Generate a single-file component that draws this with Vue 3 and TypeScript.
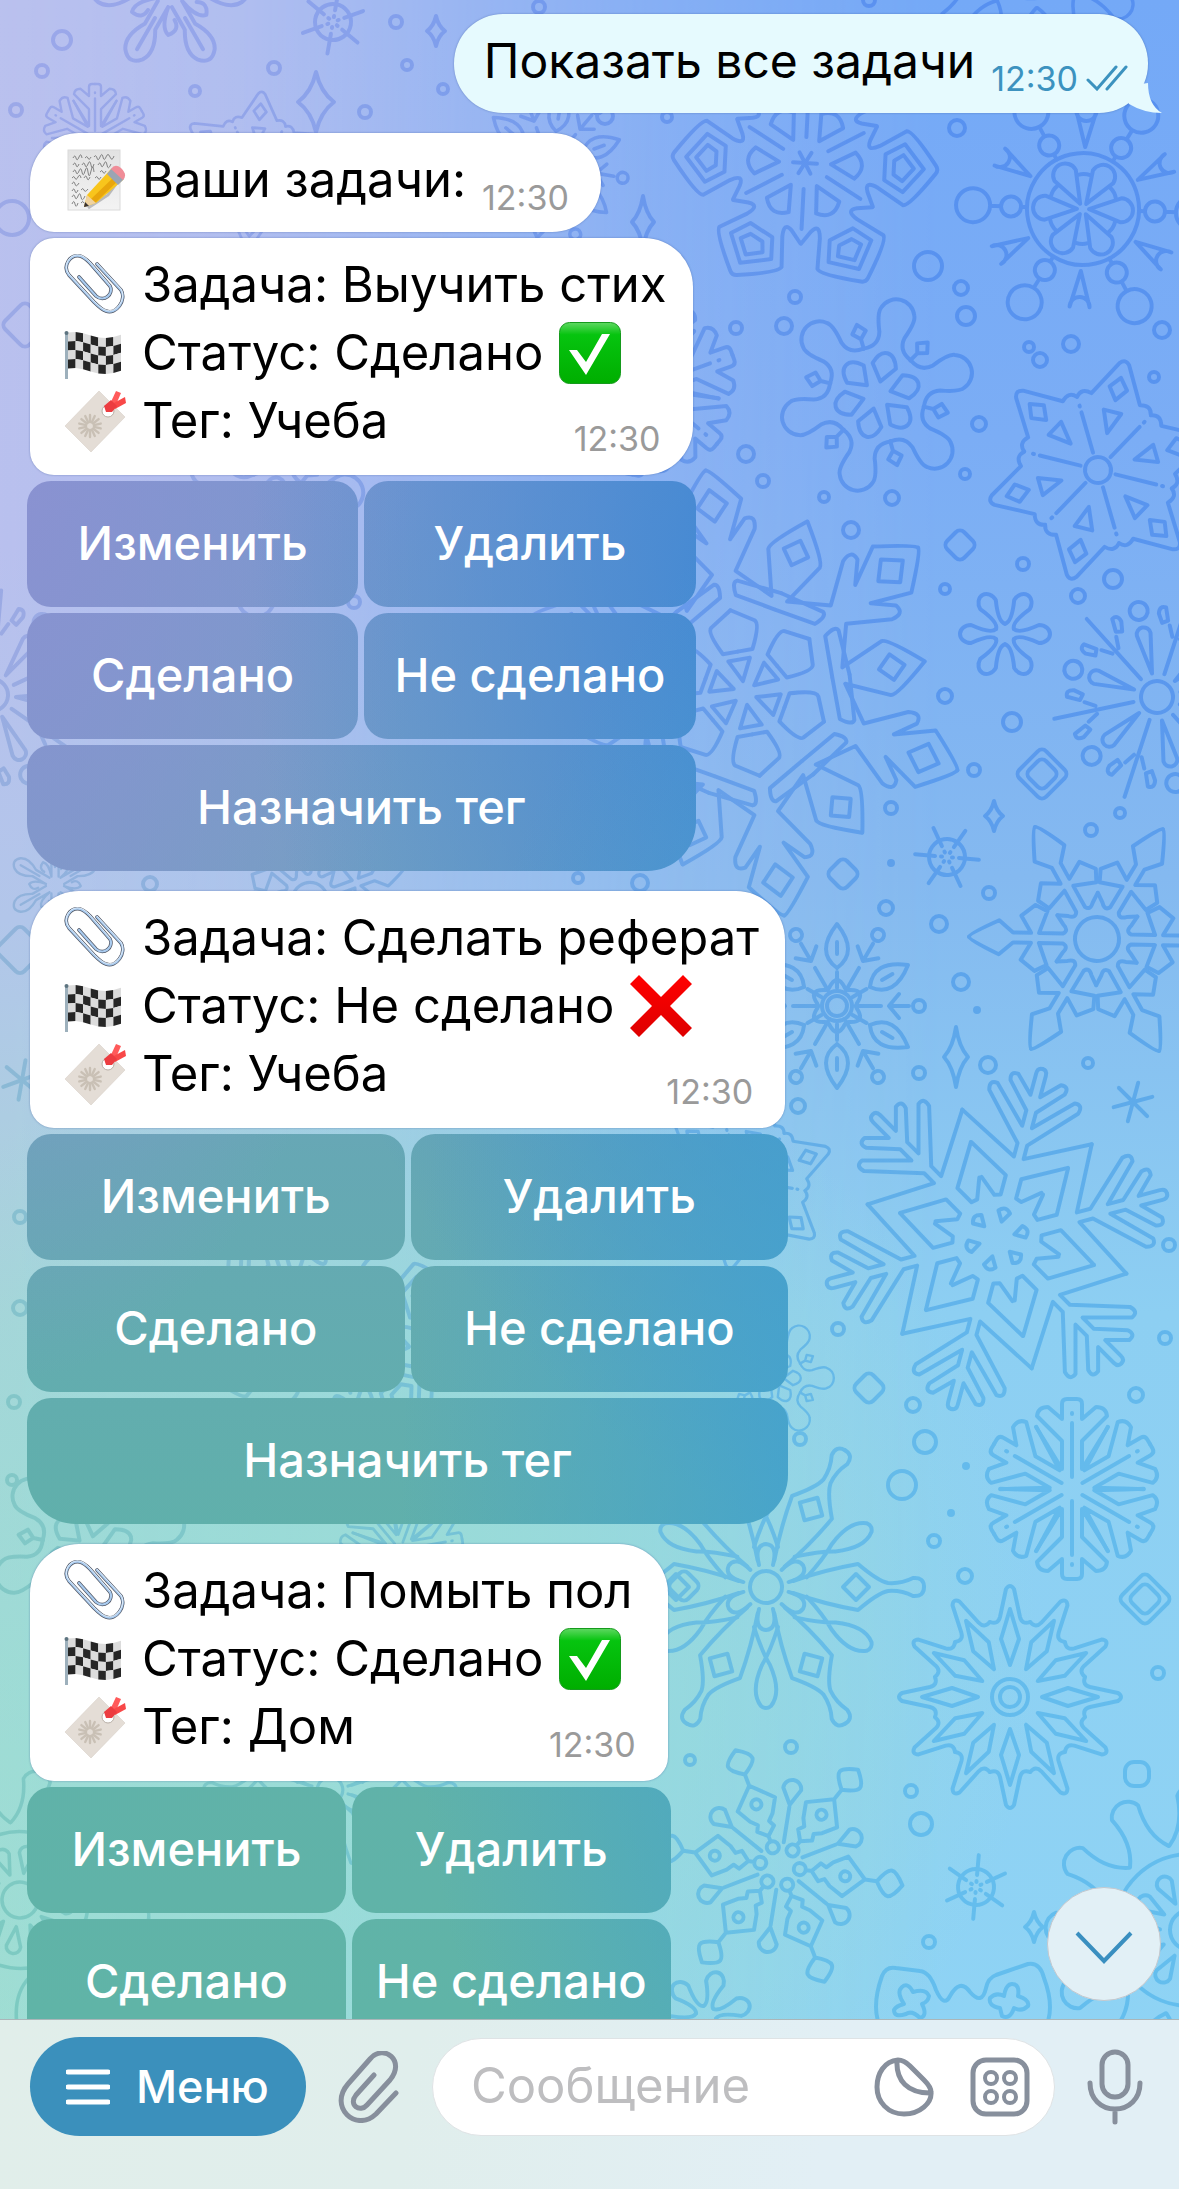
<script setup lang="ts">
import { ref } from 'vue'

interface Task {
  id: number
  title: string
  status: string
  done: boolean
  tag: string
  time: string
  actions: string[]
}

interface FlakeShape {
  n: number
  arm?: string[]
  half?: string[]
  mid?: string[]
  rings?: number[]
}

interface Flake {
  kind: string
  x: number
  y: number
  rot: number
  scale?: number
}

const baseActions = ['Изменить', 'Удалить', 'Сделано', 'Не сделано']
const tagAction = 'Назначить тег'

const tasks: Task[] = [
  { id: 1, title: 'Выучить стих', status: 'Сделано', done: true, tag: 'Учеба', time: '12:30', actions: [...baseActions, tagAction] },
  { id: 2, title: 'Сделать реферат', status: 'Не сделано', done: false, tag: 'Учеба', time: '12:30', actions: [...baseActions, tagAction] },
  { id: 3, title: 'Помыть пол', status: 'Сделано', done: true, tag: 'Дом', time: '12:30', actions: baseActions },
]

const draft = ref('')

/* Each shape describes one arm pointing up from the origin; `half` is mirrored, `mid` sits between arms. */
const shapes: Record<string, FlakeShape> = {
  kites: {
    n: 6,
    arm: [
      'M-40-70L-26-64Q-14-60-21-74L-37-100Q-38-106-4-131Q0-134 4-131Q38-106 37-100L21-74Q14-60 26-64L40-70',
      'M0-119L24-99L13-80H-13L-24-99Z',
      'M0-109L13-98L7-89H-7L-13-98Z',
      'M0-26L13-50Q0-64-13-50Z',
      'M0 0V-12',
    ],
    mid: ['M0-26V-66'],
  },
  wheel: {
    n: 6,
    rings: [56],
    arm: [
      'M0-6L-12-38A12 12 0 0 1 12-38Z',
      'M0-56V-62M10-72A10 10 0 1 1-10-72A10 10 0 1 1 10-72M0-82V-93M17-110A17 17 0 1 1-17-110A17 17 0 1 1 17-110',
    ],
    mid: ['M0-62L-10-98A10 10 0 0 0 10-98Z', 'M-6-34Q0-36 6-34'],
  },
  blob: {
    n: 6,
    arm: [
      'M-24-42Q-10-48-13-62Q-20-80-17-86A18 18 0 0 1 17-86Q20-80 13-62Q10-48 24-42',
      'M0-14L12-30Q8-43 0-43T-12-30Z',
    ],
    mid: ['M0-48V-58M0-58L7-65L0-73L-7-65Z'],
  },
  star: {
    n: 6,
    rings: [13],
    arm: ['M-38-66Q-36-76-25-73L-5-109Q0-115 5-109L25-73Q36-76 38-66', 'M0-38L9-60H-9Z', 'M0-72L9-84L0-95L-9-84Z'],
    mid: ['M0-18V-60M0-66V-67'],
  },
  crystal: {
    n: 6,
    half: [
      'M0-226Q4-226 30-192L12-154L30-172Q42-174 38-160L12-122L43-91L48-138Q50-144 91-158',
      'M53-92L12-112Q6-112 8-98L44-77',
      'M0-84L22-70Q27-66 15-42H0',
    ],
    arm: ['M0-206L15-190L0-174L-15-190Z', 'M0-12L11-34H-11Z'],
    mid: ['M0-162L13-149L0-136L-13-149Z'],
  },
  petals: { n: 6, arm: ['M-5-9Q0-14-9-34A9 11 0 1 1 9-34Q0-14 5-9'] },
  firework: {
    n: 6,
    rings: [16],
    arm: ['M0-24V-105M10-72L4-62M-10-72L-4-62M13-76L19-88Q26-88 24-80L18-72ZM-13-76L-19-88Q-26-88-24-80L-18-72Z'],
    mid: ['M0-24L-7-64A7 7 0 0 1 7-64ZM9-88A9 9 0 1 1-9-88A9 9 0 1 1 9-88'],
  },
  lace: {
    n: 6,
    rings: [22],
    half: ['M0-128Q3-128 17-98L5-84V-66L22-76L33-62L27-50L5-58V-34Q8-28 14-34L23-40'],
  },
  leaf: {
    n: 6,
    rings: [15, 10],
    arm: ['M0-38Q-22-54 0-82Q22-54 0-38M0-52V-64M0-18V-34M-8-18Q0-34 8-18'],
    mid: ['M0-18V-44M0-52V-72M-12-62L0-52L12-62M6-82A6 6 0 1 1-6-82A6 6 0 1 1 6-82'],
  },
  fir: {
    n: 6,
    half: [
      'M0-176Q5-176 5-170V-148L22-165Q31-166 28-157L5-132V-116L40-151Q49-152 46-142L5-98V-84L67-116',
      'M50-87L8-64V-44L14-42L31-56',
    ],
    arm: ['M0-18L6-28Q0-35-6-28Z'],
  },
  ferns: {
    n: 6,
    half: ['M0-90H5Q10-90 10-85V-70L24-82Q34-82 35-73L10-48V-20L26-46L36-62'],
    arm: ['M0-12V-66M0-75V-76'],
  },
  sun: {
    n: 12,
    rings: [18, 10],
    arm: ['M-20-75Q-12-72-10-80L-4-108Q0-114 4-108L10-80Q12-72 20-75', 'M0-32L9-58L0-88L-9-58Z'],
  },
  bloom: {
    n: 6,
    rings: [16],
    half: ['M0-158Q10-158 9-147Q3-135 4-122Q6-112 23-92Q17-58 6-27'],
    arm: ['M0-103L13-90L0-77L-13-90Z'],
    mid: [
      'M-12-40Q-4-65 4-78Q16-105 5-119Q0-123-5-119Q-16-105-4-78Q4-65 12-40',
      'M-7-22Q-12-42 0-43Q12-42 7-22',
    ],
  },
  lantern: {
    n: 6,
    arm: [
      'M6-20A6 6 0 1 1-6-20A6 6 0 1 1 6-20M0-26V-32M0-32L9-40L6-46L12-52L20-66L0-86L-20-66L-12-52L-6-46L-9-40ZM5-66A5 5 0 1 1-5-66A5 5 0 1 1 5-66M0-86V-98M0-98Q13-106 13-111Q13-116 0-124Q-13-116-13-111Q-13-106 0-98',
    ],
    mid: ['M0-24V-60M0-62L-9-78A9 9 0 0 1 9-78Z'],
  },
  daisy: {
    n: 12,
    rings: [76, 20],
    arm: ['M0-30L-8-52A8 8 0 0 1 8-52Z', 'M-22-84Q-8-104-15-134A16 16 0 0 1 15-134Q8-104 22-84'],
  },
  burst: { n: 6, rings: [18], arm: ['M0-12V-32M0-5V-6'] },
  asterisk: { n: 6, arm: ['M0 0V-20'] },
  oak: { n: 6, arm: ['M-6-14Q-10-36-20-38Q-28-28-18-22M-6-14L-6-40Q-18-60-10-72Q0-84 10-72Q18-60 6-40L6-14', 'M0-30V-66'] },
}

const flakes: Flake[] = [
  { kind: 'kites', x: 805, y: 163, rot: 33 },
  { kind: 'wheel', x: 1083, y: 209, rot: 32 },
  { kind: 'blob', x: 877, y: 395, rot: 14 },
  { kind: 'star', x: 1098, y: 470, rot: 14 },
  { kind: 'crystal', x: 745, y: 693, rot: -10 },
  { kind: 'petals', x: 1005, y: 634, rot: 30 },
  { kind: 'firework', x: 1157, y: 697, rot: 18 },
  { kind: 'lace', x: 1097, y: 939, rot: 31 },
  { kind: 'leaf', x: 837, y: 1006, rot: 0 },
  { kind: 'fir', x: 997, y: 1239, rot: 15 },
  { kind: 'ferns', x: 1072, y: 1489, rot: 0 },
  { kind: 'sun', x: 1010, y: 1697, rot: 0 },
  { kind: 'bloom', x: 766, y: 1587, rot: 30 },
  { kind: 'lantern', x: 780, y: 1866, rot: -21 },
  { kind: 'daisy', x: 1190, y: 1930, rot: 1 },
  { kind: 'daisy', x: 1030, y: -70, rot: 10, scale: 0.9 },
  { kind: 'burst', x: 333, y: 22, rot: 10 },
  { kind: 'burst', x: 947, y: 857, rot: 35 },
  { kind: 'burst', x: 976, y: 1887, rot: 5 },
  { kind: 'asterisk', x: 1133, y: 1102, rot: 15 },
  { kind: 'oak', x: 170, y: -8, rot: 30 },
  { kind: 'ferns', x: 95, y: 138, rot: 0, scale: 0.6 },
  { kind: 'leaf', x: 550, y: 165, rot: 10, scale: 0.9 },
  { kind: 'star', x: 255, y: 170, rot: 5, scale: 0.7 },
  { kind: 'ferns', x: 648, y: 386, rot: 10 },
  { kind: 'blob', x: 270, y: 520, rot: 10 },
  { kind: 'firework', x: -8, y: 695, rot: 5 },
  { kind: 'oak', x: 55, y: 885, rot: 0, scale: 0.6 },
  { kind: 'lace', x: 310, y: 900, rot: 10, scale: 0.8 },
  { kind: 'star', x: 745, y: 1180, rot: 10, scale: 0.8 },
  { kind: 'blob', x: 775, y: 1378, rot: 30, scale: 0.6 },
  { kind: 'kites', x: 330, y: 1330, rot: 12 },
  { kind: 'asterisk', x: 22, y: 1080, rot: 10 },
  { kind: 'blob', x: 90, y: 1550, rot: 12 },
  { kind: 'ferns', x: 400, y: 1550, rot: 20, scale: 0.7 },
  { kind: 'daisy', x: 20, y: 1900, rot: 8, scale: 0.9 },
  { kind: 'bloom', x: 330, y: 1790, rot: 30, scale: 0.8 },
  { kind: 'petals', x: 706, y: 2016, rot: 15 },
]

const dots: [number, number, number][] = [
  [928, 266, 14], [961, 288, 7], [966, 316, 9], [795, 297, 6], [784, 326, 8], [736, 328, 6], [746, 454, 8],
  [763, 481, 6], [824, 497, 5], [892, 498, 7], [851, 530, 8], [945, 589, 5], [979, 424, 7], [965, 474, 5],
  [1023, 564, 6], [1029, 347, 5], [1040, 360, 7], [1071, 344, 8], [1162, 330, 8], [1154, 377, 5], [1113, 579, 9],
  [1078, 596, 7], [945, 696, 7], [1012, 722, 9], [974, 770, 6], [891, 808, 6], [891, 863, 2], [1120, 813, 5],
  [1091, 830, 6], [886, 908, 7], [939, 924, 8], [989, 893, 6], [961, 982, 8], [977, 1010, 2], [988, 1065, 8],
  [919, 1073, 6], [798, 1106, 7], [1088, 1063, 5], [1169, 1245, 6], [1165, 1338, 6], [1136, 1395, 7], [838, 1329, 6],
  [913, 1405, 7], [800, 1439, 6], [925, 1442, 11], [902, 1485, 14], [934, 1541, 6], [965, 1576, 7], [966, 1466, 2],
  [951, 1513, 2], [791, 1747, 6], [690, 1760, 5], [911, 1791, 6], [921, 1824, 11], [929, 1942, 6], [1158, 1673, 6],
  [605, 116, 8], [667, 117, 5], [957, 128, 8], [62, 40, 9], [42, 71, 6], [16, 110, 6], [195, 91, 5], [274, 68, 6],
  [365, 112, 6], [396, 22, 6], [407, 65, 5], [443, 89, 5], [539, 7, 6], [12, 218, 17], [869, 0, 6], [20, 1217, 6],
  [20, 1308, 7], [14, 1402, 6], [12, 1480, 5], [150, 884, 7], [578, 878, 5], [640, 883, 8], [354, 602, 6],
]

/* Centre, half width, half height */
const diamonds: [number, number, number, number][] = [
  [994, 816, 9, 15], [1034, 1927, 9, 15], [436, 31, 9, 15], [956, 1057, 12, 30], [643, 222, 11, 26], [316, 102, 18, 30],
]

function diamondPath([x, y, w, h]: [number, number, number, number]): string {
  return `M${x} ${y - h}Q${x + w / 4} ${y - h / 3} ${x + w} ${y}Q${x + w / 4} ${y + h / 3} ${x} ${y + h}Q${x - w / 4} ${y + h / 3} ${x - w} ${y}Q${x - w / 4} ${y - h / 3} ${x} ${y - h}Z`
}

/* Centre and side of rounded squares standing on a corner */
const tiles: [number, number, number][] = [
  [960, 545, 24], [1042, 774, 38], [1042, 774, 24], [843, 874, 24], [869, 1388, 24], [1145, 1599, 38], [1145, 1599, 24],
  [25, 325, 34], [20, 950, 36], [684, 1586, 24],
]

const turns = (n: number): number[] => Array.from({ length: n }, (_, i) => (i * 360) / n)

const flagCells = (() => {
  const cells: { d: string; dark: boolean }[] = []
  const wave = (x: number) => 3 * Math.cos(((x - 4) / 53) * Math.PI * 1.7 + 2.6)
  const cw = 53 / 7
  for (let c = 0; c < 7; c++) {
    for (let r = 0; r < 4; r++) {
      const x1 = 4 + c * cw
      const x2 = x1 + cw
      const y1 = 13 + r * 9
      const p = (x: number, y: number) => `${x.toFixed(1)} ${(y + wave(x)).toFixed(1)}`
      cells.push({ d: `M${p(x1, y1)}L${p(x2, y1)}L${p(x2, y1 + 9)}L${p(x1, y1 + 9)}Z`, dark: (c + r) % 2 === 1 })
    }
  }
  return cells
})()
</script>

<template>
  <div class="app">
    <svg class="wallpaper" viewBox="0 0 1179 2189" preserveAspectRatio="xMinYMin slice" aria-hidden="true">
      <defs>
        <linearGradient id="sky-right" x1="0" y1="0" x2="0" y2="1">
          <stop offset="0" stop-color="#74a9f7" />
          <stop offset=".2" stop-color="#7badf5" />
          <stop offset=".4" stop-color="#84b9f0" />
          <stop offset=".6" stop-color="#8dcff2" />
          <stop offset="1" stop-color="#8fd4f5" />
        </linearGradient>
        <linearGradient id="sky-left" x1="0" y1="0" x2="0" y2="1">
          <stop offset="0" stop-color="#bac1ee" />
          <stop offset=".25" stop-color="#b9c0ee" />
          <stop offset=".42" stop-color="#b2c6ea" />
          <stop offset=".6" stop-color="#a8d4da" />
          <stop offset=".8" stop-color="#a2dcd4" />
          <stop offset="1" stop-color="#9fded2" />
        </linearGradient>
        <linearGradient id="ink-right" x1="0" y1="0" x2="0" y2="1">
          <stop offset="0" stop-color="#548ef0" />
          <stop offset=".3" stop-color="#5694ee" />
          <stop offset=".5" stop-color="#5aa8ea" />
          <stop offset=".65" stop-color="#60b8ec" />
          <stop offset="1" stop-color="#60bdee" />
        </linearGradient>
        <linearGradient id="ink-left" x1="0" y1="0" x2="0" y2="1">
          <stop offset="0" stop-color="#9aa6e9" />
          <stop offset=".3" stop-color="#98a8e2" />
          <stop offset=".5" stop-color="#88b8d4" />
          <stop offset=".65" stop-color="#80c6c6" />
          <stop offset="1" stop-color="#78cabe" />
        </linearGradient>
        <linearGradient id="fade-x" x1="0" y1="0" x2="1" y2="0">
          <stop offset="0" stop-color="#fff" />
          <stop offset=".2" stop-color="#ddd" />
          <stop offset=".55" stop-color="#444" />
          <stop offset=".8" stop-color="#000" />
        </linearGradient>
        <radialGradient id="mint" gradientUnits="userSpaceOnUse" cx="400" cy="1640" r="640">
          <stop offset="0" stop-color="#9addd5" stop-opacity=".9" />
          <stop offset=".5" stop-color="#98dcd6" stop-opacity=".55" />
          <stop offset="1" stop-color="#98dcd6" stop-opacity="0" />
        </radialGradient>
        <mask id="fade" maskUnits="userSpaceOnUse" x="0" y="0" width="1179" height="2189">
          <rect width="1179" height="2189" fill="url(#fade-x)" />
        </mask>
        <mask id="doodles" maskUnits="userSpaceOnUse" x="0" y="0" width="1179" height="2189">
          <g fill="none" stroke="#fff" stroke-width="4" stroke-linecap="round" stroke-linejoin="round">
            <g
              v-for="(f, i) in flakes"
              :key="i"
              :transform="`translate(${f.x} ${f.y}) rotate(${f.rot}) scale(${f.scale ?? 1})`"
            >
              <circle v-for="r in shapes[f.kind].rings ?? []" :key="r" :r="r" />
              <g v-for="a in turns(shapes[f.kind].n)" :key="a" :transform="`rotate(${a})`">
                <path v-for="d in shapes[f.kind].arm ?? []" :key="d" :d="d" />
                <template v-for="d in shapes[f.kind].half ?? []" :key="d">
                  <path :d="d" />
                  <path :d="d" transform="scale(-1 1)" />
                </template>
                <g :transform="`rotate(${180 / shapes[f.kind].n})`">
                  <path v-for="d in shapes[f.kind].mid ?? []" :key="d" :d="d" />
                </g>
              </g>
            </g>
            <circle v-for="([x, y, r], i) in dots" :key="`dot${i}`" :cx="x" :cy="y" :r="r" />
            <path v-for="(spark, i) in diamonds" :key="`spark${i}`" :d="diamondPath(spark)" />
            <rect
              v-for="([x, y, s], i) in tiles"
              :key="`tile${i}`"
              :x="x - s / 2"
              :y="y - s / 2"
              :width="s"
              :height="s"
              rx="6"
              :transform="`rotate(45 ${x} ${y})`"
            />
            <rect x="1125" y="1762" width="24" height="24" rx="9" />
            <path d="M882 2030Q870 2010 882 1976Q886 1966 896 1968L920 1971Q930 1972 936 1990Q944 2008 950 1996Q960 1978 970 1992Q982 2006 986 1988Q988 1978 996 1975L1028 1964Q1040 1962 1044 1978Q1056 2010 1044 2030" />
            <path d="M902 1987Q908 1982 913 1992Q926 1988 929 1996Q928 2002 922 2004Q928 2016 920 2018Q912 2010 906 2014Q894 2018 894 2010Q896 2006 904 2004Q896 1992 902 1987Z" />
            <path d="M1012 1984Q1020 1984 1018 1996Q1030 2000 1028 2006Q1022 2012 1014 2008Q1010 2020 1002 2016Q1000 2008 1000 2008Q988 2006 990 1998Q996 1992 1004 1996Q1006 1984 1012 1984Z" />
          </g>
        </mask>
      </defs>
      <rect width="1179" height="2189" fill="url(#sky-right)" />
      <rect width="1179" height="2189" fill="url(#sky-left)" mask="url(#fade)" />
      <rect width="1179" height="2189" fill="url(#mint)" />
      <g mask="url(#doodles)" opacity=".9">
        <rect width="1179" height="2189" fill="url(#ink-right)" />
        <rect width="1179" height="2189" fill="url(#ink-left)" mask="url(#fade)" />
      </g>
    </svg>

    <svg class="sprite" aria-hidden="true">
      <defs>
        <linearGradient id="green" x1="0" y1="0" x2="0" y2="1">
          <stop offset="0" stop-color="#5fd862" />
          <stop offset=".2" stop-color="#06c40f" />
          <stop offset="1" stop-color="#00ae00" />
        </linearGradient>
        <linearGradient id="red" x1="0" y1="0" x2="0" y2="1">
          <stop offset="0" stop-color="#ff0000" />
          <stop offset="1" stop-color="#de0000" />
        </linearGradient>
        <linearGradient id="paper" x1="0" y1="0" x2="0" y2="1">
          <stop offset="0" stop-color="#e2e2e2" />
          <stop offset="1" stop-color="#f3f3f3" />
        </linearGradient>
      </defs>
      <symbol id="e-memo" viewBox="0 0 62 62">
        <rect x="4" y="1" width="52" height="60" fill="url(#paper)" stroke="#dadada" />
        <g fill="none" stroke="#777" stroke-width=".9">
          <path d="M9 9q2-4 3 0t3-1t3 1M21 9q2-3 3 0t3-1M30 8q2-3 3 1t3-1t3 0t3 0t4 0t4-1" />
          <path d="M9 16q2-4 3 0t3-1M18 16q2-4 3 0t3-1t3 1t3-1M34 16q2-4 3 0t3-1t3 1t4-1" />
          <path d="M9 23q2-4 3 0t3-1t3 1t3-1t3 1t3-1t3 1M36 23q2-3 3 0t3-1" />
          <path d="M8 29q2-3 3 0t3-1t3 1M20 29q2-4 3 0t3-1M31 29q2-3 3 0t3-1" />
          <path d="M8 35q2-4 3 0t4-1M8 42q2-4 3 0t3-1M17 41q2-3 3 0t4-1" />
          <path d="M8 48q2-4 3 0t3-1t3 1t4-1M8 55q2-5 3 0t3-1M17 54q2-3 3 0" />
        </g>
        <path d="M24 59L44 46L60 24" fill="none" stroke="#000" stroke-opacity=".22" stroke-width="3" />
        <path d="M20 58L23 46L47 20L59 31L32 54Z" fill="#f8c51c" />
        <path d="M27 50L52 26L56 30L31 54Z" fill="#e8a60c" />
        <path d="M20 58L23 46L32 54Z" fill="#f0d3a0" />
        <path d="M20 58L21 53L25 57Z" fill="#3a3330" />
        <path d="M43 25L48 19L60 30L54 36Z" fill="#9aa5b3" />
        <path d="M47 20Q51 14 57 19Q64 26 59 31Z" fill="#f08d98" />
      </symbol>
      <symbol id="e-clip" viewBox="0 0 62 62">
        <g fill="none" stroke-linecap="round">
          <path d="M33 10L57 36C63 46 52 61 42 57C38 56 34 52 30 48L5 21C-2 12 6 0 16 2C20 3 23 6 26 9L46 32C50 40 40 49 32 42L15 23" stroke="#4f5563" stroke-width="3.6" />
          <path d="M33 10L57 36C63 46 52 61 42 57C38 56 34 52 30 48L5 21C-2 12 6 0 16 2C20 3 23 6 26 9L46 32C50 40 40 49 32 42L15 23" stroke="#a9cbef" stroke-width="2.2" />
          <path d="M33 9L57 35C63 45 52 60 42 56C38 55 34 51 30 47L5 20C-2 11 6 -1 16 1C20 2 23 5 26 8L46 31" stroke="#eef5fc" stroke-width=".8" />
        </g>
      </symbol>
      <symbol id="e-flag" viewBox="0 0 62 62">
        <path v-for="cell in flagCells" :key="cell.d" :d="cell.d" :fill="cell.dark ? '#262626' : '#dcdcdc'" />
        <rect x="1" y="11" width="3" height="46" fill="#9db0bc" />
        <circle cx="2.500" cy="11" r="2" fill="#5d7480" />
      </symbol>
      <symbol id="e-tag" viewBox="0 0 62 62">
        <path d="M35 1L61 27L27 62L1 36Z" fill="#e4ddd6" stroke="#d8d0c8" stroke-width=".6" />
        <g stroke="#c9c0b5" stroke-width="2.4" stroke-linecap="round">
          <path v-for="a in turns(14)" :key="a" d="M26 32V25" :transform="`rotate(${a} 26 36)`" />
        </g>
        <circle cx="44" cy="21" r="6" fill="#fff" stroke="#b8afa6" />
        <path d="M46 14L52 1L57 3L51 17Z" fill="#ff5a5a" />
        <path d="M48 14L61 7L62 13L51 19Z" fill="#f84848" />
        <path d="M40 16L47 10L53 16L48 22L42 22Z" fill="#ec3c40" />
      </symbol>
      <symbol id="e-done" viewBox="0 0 62 62">
        <rect x=".5" y=".5" width="61" height="61" rx="10" fill="url(#green)" stroke="#159a1c" />
        <path d="M10 28H18L27 40L43 12H51L27 53Z" fill="#fff" />
      </symbol>
      <symbol id="e-cross" viewBox="0 0 62 62">
        <path d="M0 9L9 0L31 22L53 0L62 9L40 31L62 53L53 62L31 40L9 62L0 53L22 31Z" fill="url(#red)" />
      </symbol>
    </svg>

    <main class="chat">
      <article class="bubble single out">
        <p class="line">Показать все задачи</p>
        <time class="time">12:30</time>
        <svg class="ticks" viewBox="0 0 42 26" role="img" aria-label="Прочитано">
          <path d="M2 15L11 24L30 2M21 24L40 2" />
        </svg>
        <svg class="tail" viewBox="0 0 60 50" aria-hidden="true">
          <path d="M46 20Q46 42 60 50Q42 50 27 41L18 24Z" />
        </svg>
      </article>

      <article class="bubble single">
        <p class="line">
          <svg class="emoji"><use href="#e-memo" /></svg>
          <span>Ваши задачи:</span>
        </p>
        <time class="time">12:30</time>
      </article>

      <section v-for="task in tasks" :key="task.id" class="task">
        <article class="bubble card">
          <p class="line">
            <svg class="emoji"><use href="#e-clip" /></svg>
            <span>Задача: {{ task.title }}</span>
          </p>
          <p class="line">
            <svg class="emoji"><use href="#e-flag" /></svg>
            <span>Статус: {{ task.status }}</span>
            <svg class="emoji"><use :href="task.done ? '#e-done' : '#e-cross'" /></svg>
          </p>
          <div class="foot">
            <p class="line">
              <svg class="emoji"><use href="#e-tag" /></svg>
              <span>Тег: {{ task.tag }}</span>
            </p>
            <time class="time">{{ task.time }}</time>
          </div>
        </article>
        <div class="keys">
          <button
            v-for="label in task.actions"
            :key="label"
            type="button"
            class="key"
            :class="{ wide: label === tagAction }"
          >
            {{ label }}
          </button>
        </div>
      </section>

      <button type="button" class="down" aria-label="Вниз">
        <svg viewBox="0 0 58 34"><path d="M2 2L29 30L56 2" /></svg>
      </button>
    </main>

    <form class="composer" @submit.prevent>
      <button type="button" class="menu">
        <svg viewBox="0 0 44 36"><path d="M2 3H42M2 18H42M2 33H42" /></svg>
        <span>Меню</span>
      </button>
      <button type="button" class="icon" aria-label="Прикрепить">
        <svg class="attach" viewBox="0 0 62 72">
          <path d="M36 24L18 44C10 54 22 62 29 54L52 29C68 10 46-8 32 8L10 33C-10 56 18 82 38 63L58 42" />
        </svg>
      </button>
      <div class="field">
        <input v-model="draft" type="text" placeholder="Сообщение" aria-label="Сообщение" />
        <button type="button" class="icon" aria-label="Стикеры">
          <svg class="square" viewBox="0 0 60 60">
            <path d="M24 3C10 4 3 17 3 30C3 45 14 57 30 57C46 57 58 46 57 35C57 30 52 25 50 23L36 9C32 5 28 3 24 3ZM23 4C22 24 34 36 56 36" />
          </svg>
        </button>
        <button type="button" class="icon" aria-label="Команды">
          <svg class="square" viewBox="0 0 60 60">
            <rect x="3" y="3" width="54" height="54" rx="13" />
            <g stroke-width="4">
              <circle cx="21" cy="21" r="6" />
              <circle cx="40" cy="21" r="6" />
              <circle cx="21" cy="40" r="6" />
              <circle cx="40" cy="40" r="6" />
            </g>
          </svg>
        </button>
      </div>
      <button type="button" class="icon" aria-label="Голосовое сообщение">
        <svg class="mic" viewBox="0 0 56 76">
          <rect x="15" y="3" width="26" height="45" rx="13" />
          <path d="M3 34C3 50 14 60 28 60C42 60 53 50 53 34M28 60V73" />
        </svg>
      </button>
    </form>
  </div>
</template>

<style>
body {
  margin: 0;
}
</style>

<style scoped>
.app {
  position: relative;
  display: flex;
  flex-direction: column;
  height: 100vh;
  overflow: hidden;
  font-family: Inter, 'Liberation Sans', sans-serif;
  font-size: 49px;
  color: #000;
}

.wallpaper {
  position: absolute;
  inset: 0;
  width: 100%;
  height: 100%;
}

.sprite {
  position: absolute;
  width: 0;
  height: 0;
}

button {
  border: 0;
  padding: 0;
  margin: 0;
  font: inherit;
  background: none;
}

.chat {
  position: relative;
  flex: 1;
  min-height: 0;
  overflow: hidden;
  display: flex;
  flex-direction: column;
  align-items: flex-start;
  padding: 14px 27px 0;
}

.bubble {
  margin: 0 3px;
  padding: 13px 32px 20px 34px;
  border-radius: 24px 49px 49px 24px;
  background: #fff;
  box-shadow: 0 0 2px rgba(40, 70, 140, 0.5);
}

.card {
  padding-right: 26px;
}

.task + .task .card {
  border-radius: 49px 49px 24px 24px;
}

.single {
  display: flex;
  align-items: flex-end;
  gap: 16px;
  margin-bottom: 6px;
  padding-bottom: 18px;
  border-radius: 49px 49px 49px 24px;
}

.out {
  position: relative;
  align-self: flex-end;
  margin: 0 4px 20px;
  padding-right: 20px;
  padding-left: 30px;
  border-radius: 49px;
  font-size: 48px;
  background: #e6fafe;
}

.line {
  display: flex;
  align-items: center;
  gap: 16px;
  height: 68px;
  margin: 0;
  line-height: 68px;
  white-space: nowrap;
}

.emoji {
  flex: none;
  width: 62px;
  height: 62px;
}

.time {
  font-size: 34px;
  line-height: 32px;
  color: #9a9a9a;
}

.out .time {
  color: #3c92bf;
}

.ticks {
  width: 42px;
  height: 26px;
  margin: 0 0 4px -8px;
}

.ticks path {
  fill: none;
  stroke: #3c92bf;
  stroke-width: 3;
  stroke-linecap: round;
}

.tail {
  position: absolute;
  right: -14px;
  bottom: 0;
  width: 60px;
  height: 50px;
  fill: #e6fafe;
}

.task {
  display: flex;
  flex-direction: column;
  gap: 6px;
  margin-bottom: 20px;
}

.foot {
  display: flex;
  align-items: flex-end;
  justify-content: space-between;
  padding-right: 6px;
}

.keys {
  display: grid;
  grid-template-columns: 1fr 1fr;
  gap: 6px;
}

.key {
  height: 126px;
  padding: 0 24px 4px;
  border-radius: 24px;
  font-size: 47px;
  font-weight: 500;
  white-space: nowrap;
  color: #fff;
  background-image:
    radial-gradient(ellipse 600px 1100px at 1000px 1500px, #42a2d2 20%, rgba(66, 162, 210, 0) 100%),
    radial-gradient(ellipse 700px 1000px at 950px 560px, #3f88d4 25%, rgba(63, 136, 212, 0) 100%),
    radial-gradient(ellipse 400px 900px at 20px 480px, #8a92d1 0%, rgba(138, 146, 209, 0) 100%),
    linear-gradient(#7a98cf 22%, #74a0c2 40%, #66a8b4 53%, #60b0ab 70%, #60b4a7 92%);
  background-attachment: fixed;
}

.wide {
  grid-column: 1 / -1;
  border-radius: 24px 24px 49px 49px;
}

.down {
  position: absolute;
  right: 18px;
  bottom: 18px;
  display: grid;
  place-items: center;
  box-sizing: border-box;
  width: 114px;
  height: 114px;
  border: 1px solid #c4c8ce;
  border-radius: 50%;
  background: #e2f0f6;
}

.down svg {
  width: 58px;
  height: 34px;
  margin-top: 8px;
  fill: none;
  stroke: #3a8fc0;
  stroke-width: 4;
}

.composer {
  position: relative;
  display: flex;
  align-items: center;
  gap: 32px;
  padding: 17px 36px 53px 30px;
  border-top: 1px solid #abb6b9;
  background: linear-gradient(100deg, #e1eeea 0%, #e0eeec 35%, #e2eff5 70%);
}

.menu {
  display: flex;
  align-items: center;
  gap: 26px;
  height: 99px;
  padding: 0 37px 0 36px;
  border-radius: 50px;
  font-size: 45px;
  font-weight: 500;
  color: #fff;
  background: #3b90bc;
}

.menu svg {
  width: 44px;
  height: 36px;
  stroke: #fff;
  stroke-width: 5;
  stroke-linecap: round;
}

.icon {
  display: grid;
  flex: none;
}

.icon svg {
  fill: none;
  stroke: #878f9c;
  stroke-width: 5;
  stroke-linecap: round;
  stroke-linejoin: round;
}

.attach {
  width: 62px;
  height: 72px;
}

.square {
  width: 60px;
  height: 60px;
}

.mic {
  width: 56px;
  height: 76px;
}

.field {
  display: flex;
  flex: 1;
  align-items: center;
  gap: 36px;
  box-sizing: border-box;
  min-width: 0;
  height: 98px;
  padding: 0 24px 0 38px;
  border: 1px solid #dfe3e5;
  border-radius: 49px;
  background: #fff;
}

.field input {
  flex: 1;
  min-width: 0;
  padding: 0 0 3px;
  border: 0;
  outline: 0;
  font: inherit;
  background: none;
}

.field input::placeholder {
  color: #bebec0;
  opacity: 1;
}
</style>
